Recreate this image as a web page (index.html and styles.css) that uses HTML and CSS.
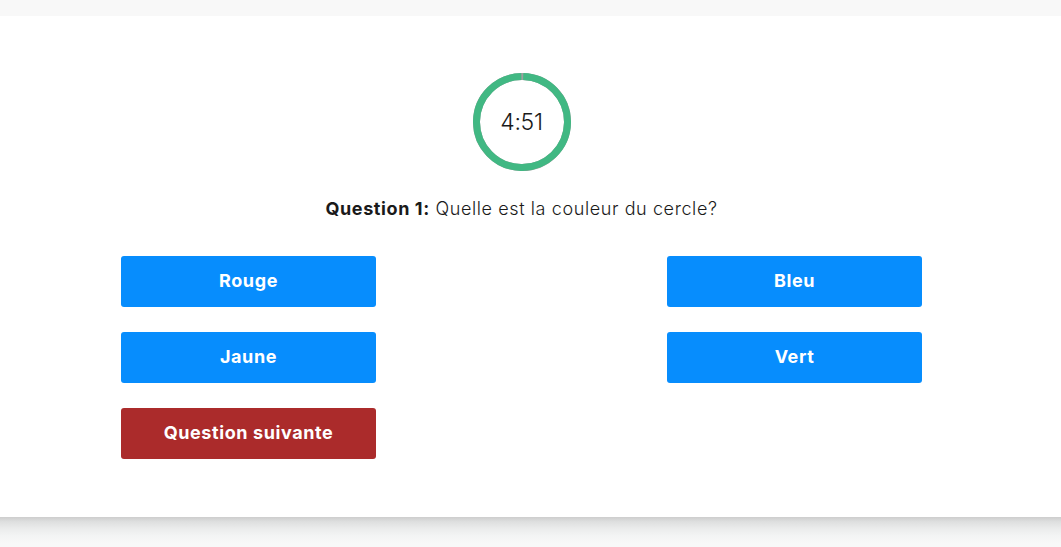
FILE: index.html
```html
<!DOCTYPE html>
<html lang="fr">
<head>
<meta charset="utf-8">
<title>Quiz</title>
<link rel="stylesheet" href="styles.css">
</head>
<body>
<main class="card">
  <div class="content">
    <div class="timer">
      <svg class="ring" width="98" height="98" viewBox="0 0 98 98">
        <circle cx="49" cy="49" r="45.5" fill="none" stroke="#9e9e9e" stroke-width="7"/>
        <circle cx="49" cy="49" r="45.5" fill="none" stroke="#41b883" stroke-width="7" stroke-dasharray="283.5 2.4" transform="rotate(-88.5 49 49)"/>
      </svg>
      <span class="time">4:51</span>
    </div>
    <p class="question"><strong>Question 1:</strong> Quelle est la couleur du cercle?</p>
    <div class="answers">
      <button class="btn btn-answer">Rouge</button>
      <button class="btn btn-answer">Bleu</button>
      <button class="btn btn-answer">Jaune</button>
      <button class="btn btn-answer">Vert</button>
      <button class="btn btn-next">Question suivante</button>
    </div>
  </div>
</main>
<div class="card-shade"></div>
</body>
</html>
```
FILE: styles.css
```css
html, body {
  margin: 0;
  padding: 0;
}
body {
  background: #f8f8f8;
  font-family: "Inter", "Noto Sans", sans-serif;
  color: #1a1a1a;
  padding-top: 16px;
}
.card {
  background: #fff;
  height: 501px;
}
.card-shade {
  height: 26px;
  background: linear-gradient(to bottom, #cdcdcd 0%, #dedfdf 18%, #ebecec 45%, #f3f4f4 72%, #f8f8f8 100%);
}
.content {
  width: 801px;
  margin-left: 121px;
  padding-top: 57px;
  display: flex;
  flex-direction: column;
  align-items: center;
}
.timer {
  position: relative;
  width: 98px;
  height: 98px;
  display: flex;
  align-items: center;
  justify-content: center;
}
.ring {
  position: absolute;
  left: 0;
  top: 0;
}
.time {
  position: relative;
  font-size: 23px;
  font-weight: 300;
  letter-spacing: -0.3px;
}
.question {
  margin: 26px 0 0;
  font-size: 18px;
  font-weight: 300;
  line-height: 24px;
  letter-spacing: 0.6px;
}
.question strong {
  font-weight: 700;
}
.answers {
  margin-top: 35px;
  width: 100%;
  display: grid;
  grid-template-columns: 255px 255px;
  justify-content: space-between;
  row-gap: 25px;
}
.btn {
  height: 51px;
  border: none;
  border-radius: 3px;
  color: #fff;
  font-family: inherit;
  font-size: 18px;
  font-weight: 700;
  letter-spacing: 0.6px;
  line-height: 1;
  padding: 0 0 2px;
  cursor: pointer;
}
.btn-answer {
  background: #078dfd;
}
.btn-next {
  background: #ab2b2b;
}
```
